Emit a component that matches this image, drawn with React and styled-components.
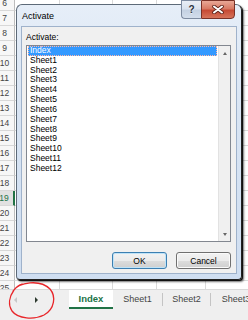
import React from "react";
import styled, { createGlobalStyle } from "styled-components";

const GlobalStyle = createGlobalStyle`
  html, body {
    margin: 0;
    padding: 0;
    background: #fff;
  }
  body {
    font-family: "Liberation Sans", Arial, sans-serif;
  }
`;

const Screen = styled.div`
  position: relative;
  width: 248px;
  height: 320px;
  overflow: hidden;
  display: flex;
  flex-direction: column;
  background: #fff;
`;

// spreadsheet grid behind the dialog
const Sheet = styled.div`
  height: 289px;
  flex: 0 0 289px;
  overflow: hidden;
`;
const Rows = styled.div`
  margin: -4px 0 0 -5px;
`;
const Row = styled.div`
  display: flex;
  height: 15px;
`;
const RowHead = styled.div`
  flex: 0 0 20px;
  box-sizing: border-box;
  border-bottom: 1px solid #d8d8d8;
  border-right: ${(p) => (p.$active ? "2px solid #217346" : "1px solid #bdbdbd")};
  background: ${(p) => (p.$active ? "#e1e1e1" : "#f7f7f7")};
  color: ${(p) => (p.$active ? "#217346" : "#444")};
  font-size: 8.5px;
  line-height: 14px;
  text-align: center;
`;
const Cell = styled.div`
  flex: 0 0 ${(p) => p.$w}px;
  box-sizing: border-box;
  border-right: 1px solid #dadada;
  border-bottom: 1px solid #dadada;
`;

// dialog
const Dialog = styled.div`
  position: absolute;
  left: 16px;
  top: 4px;
  width: 226px;
  height: 276px;
  box-sizing: border-box;
  display: flex;
  flex-direction: column;
  padding: 0 4px 5px 4px;
  border: 1px solid #5d6a78;
  border-right-color: #222;
  border-bottom-color: #222;
  border-radius: 6px 6px 4px 4px;
  background: linear-gradient(to bottom, #e6eef8 0%, #d8e4f3 40%, #cfdef1 100%);
  box-shadow: 1px 1px 0 #111, 2px 2px 2px rgba(0, 0, 0, 0.55);
`;
const TitleBar = styled.div`
  flex: 0 0 21px;
  display: flex;
  align-items: center;
  padding-left: 1px;
`;
const Title = styled.span`
  flex: 1;
  font-size: 9px;
  color: #000;
`;
const CaptionButtons = styled.div`
  align-self: flex-start;
  display: flex;
  margin: -5px 2px 0 0;
`;
const HelpButton = styled.div`
  width: 20px;
  height: 19px;
  box-sizing: border-box;
  border: 1px solid #7d8ba0;
  border-right: none;
  border-radius: 0 0 0 4px;
  background: linear-gradient(to bottom, #e9eef5 0%, #d9e2ee 45%, #c4d1e2 55%, #d3deec 100%);
  display: flex;
  align-items: center;
  justify-content: center;
  font: bold 10px "Liberation Sans", Arial, sans-serif;
  color: #2a323c;
  text-shadow: 0 1px 0 rgba(255, 255, 255, 0.7);
`;
const CloseButton = styled.div`
  width: 34px;
  height: 19px;
  box-sizing: border-box;
  border: 1px solid #7a3126;
  border-radius: 0 0 4px 0;
  background: linear-gradient(to bottom, #e9a896 0%, #d87a64 45%, #c64a34 55%, #d6735a 100%);
  display: flex;
  align-items: center;
  justify-content: center;
`;
const Client = styled.div`
  flex: 1;
  display: flex;
  flex-direction: column;
  background: #f0f0f0;
  border: 1px solid #9fb2cb;
  padding: 5px 5px 4px 4px;
  min-height: 0;
`;
const Label = styled.div`
  font-size: 8.5px;
  line-height: 11px;
  color: #000;
  margin-bottom: 2px;
`;
const ListBox = styled.div`
  flex: 1;
  display: flex;
  background: #fff;
  border: 1px solid #828790;
  min-height: 0;
`;
const List = styled.div`
  flex: 1;
  padding: 0 1px;
`;
const Item = styled.div`
  height: 9.83px;
  line-height: 9.83px;
  padding-left: 2px;
  font-size: 8.5px;
  color: ${(p) => (p.$selected ? "#fff" : "#000")};
  background: ${(p) => (p.$selected ? "#3399ff" : "transparent")};
  outline: ${(p) => (p.$selected ? "1px dotted #ffb7a8" : "none")};
  outline-offset: -1px;
`;
const ScrollBar = styled.div`
  flex: 0 0 11px;
  display: flex;
  flex-direction: column;
  justify-content: space-between;
  align-items: center;
  background: #f0f0f0;
  border-left: 1px solid #e2e2e2;
  padding: 6px 0 5px;
`;
const Arrow = styled.span`
  width: 0;
  height: 0;
  border-left: 2.5px solid transparent;
  border-right: 2.5px solid transparent;
  ${(p) =>
    p.$down ? "border-top: 3px solid #666;" : "border-bottom: 3px solid #666;"}
`;
const ButtonRow = styled.div`
  display: flex;
  justify-content: flex-end;
  gap: 9px;
  margin-top: 10px;
`;
const Button = styled.button`
  width: 55px;
  height: 17px;
  padding: 0;
  box-sizing: border-box;
  border: 1px solid ${(p) => (p.$default ? "#3c7fb1" : "#707070")};
  border-radius: 3px;
  background: linear-gradient(to bottom, #f2f2f2 0%, #ebebeb 50%, #dddddd 51%, #cfcfcf 100%);
  box-shadow: inset 0 0 0 1px ${(p) => (p.$default ? "#bfe3f8" : "#fafafa")};
  font: 8.5px "Liberation Sans", Arial, sans-serif;
  color: #000;
`;

// sheet tab bar
const TabBar = styled.div`
  flex: 1;
  display: flex;
  align-items: flex-start;
  background: #efefef;
  border-top: 1px solid #d9d9d9;
`;
const Nav = styled.div`
  flex: 0 0 69px;
  height: 20px;
  box-sizing: border-box;
  display: flex;
  align-items: center;
  gap: 18px;
  padding-left: 14px;
`;
const NavArrow = styled.span`
  width: 0;
  height: 0;
  border-top: 3px solid transparent;
  border-bottom: 3px solid transparent;
  ${(p) =>
    p.$left
      ? "border-right: 3px solid #c8c8c8;"
      : "border-left: 3px solid #2d3a2f;"}
`;
const Tab = styled.div`
  flex: 0 0 ${(p) => p.$w}px;
  height: 19px;
  box-sizing: border-box;
  text-align: center;
  font-size: ${(p) => (p.$active ? "9.5px" : "9px")};
  font-weight: ${(p) => (p.$active ? "bold" : "normal")};
  line-height: ${(p) => (p.$active ? "17px" : "19px")};
  color: ${(p) => (p.$active ? "#217346" : "#444")};
  background: ${(p) => (p.$active ? "#fff" : "transparent")};
  border-bottom: ${(p) => (p.$active ? "2px solid #217346" : "none")};
  white-space: nowrap;
  overflow: hidden;
`;
const TabSep = styled.span`
  flex: 0 0 1px;
  height: 13px;
  margin-top: 3px;
  background: #c4c4c4;
`;
const Annotation = styled.svg`
  position: absolute;
  left: 0;
  top: 278px;
  pointer-events: none;
`;

const rowNumbers = Array.from({ length: 20 }, (_, i) => i + 6);
const colWidths = [45, 53, 44, 49, 49];
const sheets = ["Index", ...Array.from({ length: 12 }, (_, i) => "Sheet" + (i + 1))];

function App() {
  return (
    <Screen>
      <GlobalStyle />
      <Sheet>
        <Rows>
          {rowNumbers.map((n) => (
            <Row key={n}>
              <RowHead $active={n === 19}>{n}</RowHead>
              {colWidths.map((w, i) => (
                <Cell key={i} $w={w} />
              ))}
            </Row>
          ))}
        </Rows>
      </Sheet>

      <TabBar>
        <Nav>
          <NavArrow $left />
          <NavArrow />
        </Nav>
        <Tab $active $w={44}>Index</Tab>
        <Tab $w={49}>Sheet1</Tab>
        <TabSep />
        <Tab $w={47}>Sheet2</Tab>
        <TabSep />
        <Tab $w={50}>Sheet3</Tab>
      </TabBar>

      <Dialog>
        <TitleBar>
          <Title>Activate</Title>
          <CaptionButtons>
            <HelpButton>?</HelpButton>
            <CloseButton>
              <svg width="12" height="9" viewBox="0 0 12 9">
                <path d="M2 1.5 L10 7.5 M10 1.5 L2 7.5" stroke="#5a1f16" strokeWidth="3.6" strokeLinecap="round" />
                <path d="M2 1.5 L10 7.5 M10 1.5 L2 7.5" stroke="#fff" strokeWidth="2" strokeLinecap="round" />
              </svg>
            </CloseButton>
          </CaptionButtons>
        </TitleBar>
        <Client>
          <Label>Activate:</Label>
          <ListBox>
            <List>
              {sheets.map((s, i) => (
                <Item key={s} $selected={i === 0}>{s}</Item>
              ))}
            </List>
            <ScrollBar>
              <Arrow />
              <Arrow $down />
            </ScrollBar>
          </ListBox>
          <ButtonRow>
            <Button $default>OK</Button>
            <Button>Cancel</Button>
          </ButtonRow>
        </Client>
      </Dialog>

      <Annotation width="60" height="42" viewBox="0 0 60 42">
        <path
          d="M13 13 C19 4, 40 1, 50 11 C56 18, 55 31, 44 37 C34 42, 18 41, 12 33 C8 27, 9 19, 14 12 C16 9, 19 7, 22 6"
          fill="none"
          stroke="#e8262a"
          strokeWidth="1.3"
          strokeLinecap="round"
        />
      </Annotation>
    </Screen>
  );
}

export default App;
